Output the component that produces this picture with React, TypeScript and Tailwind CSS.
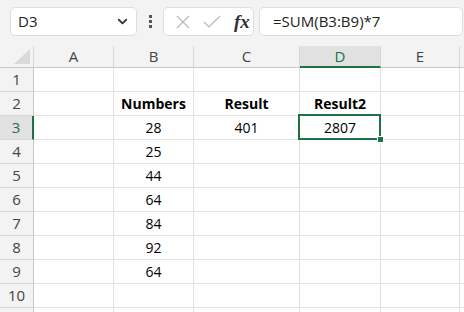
import { ChevronDown } from 'lucide-react';

const cols = [
  { key: 'A', w: 'w-[80px]' },
  { key: 'B', w: 'w-[80px]' },
  { key: 'C', w: 'w-[106px]' },
  { key: 'D', w: 'w-[81px]' },
  { key: 'E', w: 'w-[79px]' },
];

const data: Record<number, Record<string, { v: string; bold?: boolean }>> = {
  2: { B: { v: 'Numbers', bold: true }, C: { v: 'Result', bold: true }, D: { v: 'Result2', bold: true } },
  3: { B: { v: '28' }, C: { v: '401' }, D: { v: '2807' } },
  4: { B: { v: '25' } },
  5: { B: { v: '44' } },
  6: { B: { v: '64' } },
  7: { B: { v: '84' } },
  8: { B: { v: '92' } },
  9: { B: { v: '64' } },
};

const rows = [1, 2, 3, 4, 5, 6, 7, 8, 9, 10, 11];

const FormulaBar = () => (
  <div className="h-[46px] bg-[#f3f3f3] flex items-start pt-[7px] pl-[10px] font-['Open_Sans',sans-serif]">
    <div className="w-[127px] h-[29px] bg-white border border-[#dedede] rounded-[5px] flex items-center justify-between pl-[7px] pr-[6px]">
      <span className="text-[15px] text-[#222]">D3</span>
      <ChevronDown size={15} strokeWidth={3} className="text-[#333]" />
    </div>
    <div className="w-[26px] h-[29px] flex flex-col items-center justify-center gap-[2px]">
      <span className="w-[3px] h-[3px] bg-[#555]" />
      <span className="w-[3px] h-[3px] bg-[#555]" />
      <span className="w-[3px] h-[3px] bg-[#555]" />
    </div>
    <div className="w-[91px] h-[29px] bg-white border border-[#dedede] rounded-[5px] flex items-center pl-[12px] gap-[10px]">
      <svg width="14" height="14" viewBox="0 0 14 14" className="text-[#b8b8b8]">
        <path d="M1 1 L13 13 M13 1 L1 13" stroke="currentColor" strokeWidth="1.2" fill="none" />
      </svg>
      <svg width="18" height="14" viewBox="0 0 18 14" className="text-[#b8b8b8] ml-[3px]">
        <path d="M1 7 L6 12 L17 1" stroke="currentColor" strokeWidth="1.2" fill="none" />
      </svg>
      <span className="ml-[3px] text-[19px] italic font-bold text-[#333] font-['Liberation_Serif',serif] leading-none">fx</span>
    </div>
    <div className="ml-[5px] w-[204px] h-[29px] bg-white border border-[#dedede] rounded-[5px] flex items-center pl-[13px]">
      <span className="text-[15px] text-[#222]">=SUM(B3:B9)*7</span>
    </div>
  </div>
);

const Sheet = () => (
  <div className="font-['Open_Sans',sans-serif] text-[14px] text-black">
    <div className="flex h-[22px] bg-[#f3f3f3] border-b border-[#c8c8c8]">
      <div className="w-[34px] border-r border-[#d8d8d8] relative">
        <svg width="16" height="15" viewBox="0 0 16 15" className="absolute right-[3px] bottom-[3px]">
          <polygon points="16,0 16,15 0,15" fill="#d9d9d9" />
        </svg>
      </div>
      {cols.map((c) => (
        <div
          key={c.key}
          className={`${c.w} flex items-center justify-center border-r border-[#d8d8d8] text-[15px] ${
            c.key === 'D' ? 'bg-[#e1e1e1] text-[#1e7145] border-b-2 border-b-[#1e7145] -mb-px' : 'text-[#444]'
          }`}
        >
          {c.key}
        </div>
      ))}
      <div className="flex-1" />
    </div>
    {rows.map((r) => (
      <div key={r} className="flex h-[24px]">
        <div
          className={`w-[34px] flex items-center justify-center border-b border-[#d8d8d8] text-[15px] ${
            r === 3
              ? 'bg-[#e1e1e1] text-[#1e7145] border-r-2 border-r-[#1e7145]'
              : 'bg-[#f3f3f3] text-[#444] border-r border-r-[#c8c8c8]'
          }`}
        >
          {r <= 10 ? r : ''}
        </div>
        {cols.map((c) => {
          const cell = data[r]?.[c.key];
          const sel = r === 3 && c.key === 'D';
          return (
            <div
              key={c.key}
              className={`${c.w} relative flex items-center justify-center border-r border-b border-[#e1e1e1] ${
                cell?.bold ? 'font-bold' : ''
              } ${sel ? 'z-10' : ''}`}
            >
              {cell?.v}
              {sel && (
                <>
                  <div className="absolute -left-[2px] -top-[2px] -right-[1px] -bottom-[1px] border-2 border-[#1e7145]" />
                  <div className="absolute -right-[4px] -bottom-[4px] w-[7px] h-[7px] bg-[#1e7145] border border-white" />
                </>
              )}
            </div>
          );
        })}
        <div className="flex-1 border-b border-[#e1e1e1]" />
      </div>
    ))}
  </div>
);

export default function App() {
  return (
    <div className="w-[464px] h-[312px] overflow-hidden bg-white">
      <FormulaBar />
      <Sheet />
    </div>
  );
}
